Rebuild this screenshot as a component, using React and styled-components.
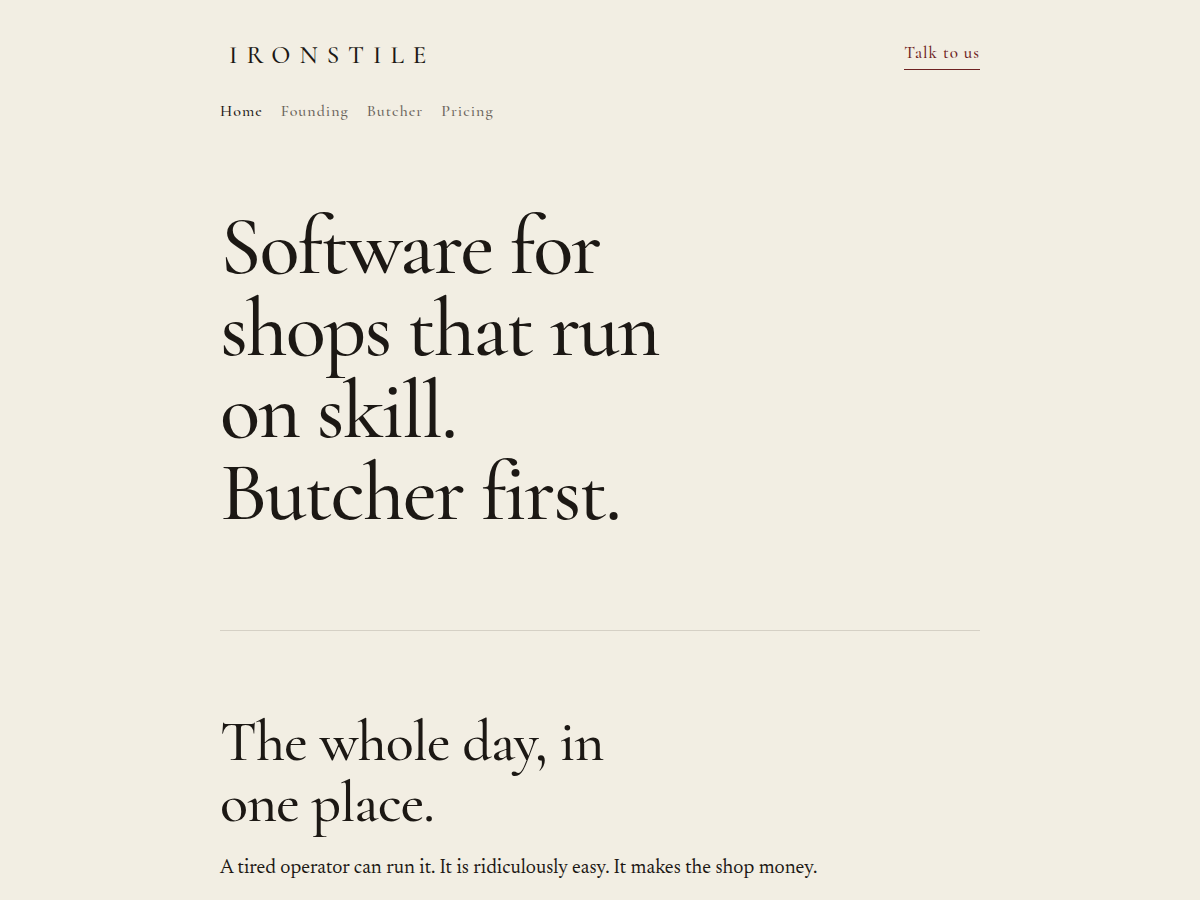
import React from "react";
import styled, { createGlobalStyle } from "styled-components";

const display = `"Cormorant Garamond", "Liberation Serif", serif`;
const body = `"Newsreader", "Liberation Serif", serif`;

const GlobalStyle = createGlobalStyle`
  *, *::before, *::after { box-sizing: border-box; }
  body {
    margin: 0;
    background: #f2eee3;
    color: #1c1814;
    font-family: ${body};
  }
`;

const Page = styled.div`
  max-width: 808px;
  margin: 0 auto;
  padding: 0 24px;
`;

const Header = styled.header`
  display: flex;
  flex-direction: column;
  gap: 30px;
  padding-top: 40px;
`;

const TopRow = styled.div`
  display: flex;
  justify-content: space-between;
  align-items: center;
`;

const Wordmark = styled.a`
  padding-left: 9px;
  font: 500 25px/30px ${display};
  letter-spacing: 9px;
  color: inherit;
  text-decoration: none;
`;

const ContactLink = styled.a`
  padding-bottom: 3px;
  border-bottom: 1px solid #6e2222;
  font: 500 17px/26px ${display};
  letter-spacing: 1px;
  color: #6e2222;
  text-decoration: none;
`;

const Nav = styled.nav`
  display: flex;
  flex-wrap: wrap;
  gap: 18px;
`;

const NavLink = styled.a`
  font: 500 16px/22px ${display};
  letter-spacing: 1px;
  color: ${({ $current }) => ($current ? "#1c1814" : "#6a645b")};
  text-decoration: none;
`;

const Hero = styled.section`
  padding: 84px 0 96px;
  border-bottom: 1px solid #d5d0c5;
`;

const HeroTitle = styled.h1`
  max-width: 480px;
  margin: 0;
  font: 500 83px/82px ${display};
  letter-spacing: -2px;
`;

const Section = styled.section`
  padding: 80px 0;
`;

const SectionTitle = styled.h2`
  max-width: 440px;
  margin: 0 0 20px;
  font: 500 58px/61px ${display};
  letter-spacing: -1px;
`;

const Lead = styled.p`
  margin: 0;
  font: 400 20px/30px ${body};
`;

const links = ["Home", "Founding", "Butcher", "Pricing"];

export default function App() {
  return (
    <>
      <GlobalStyle />
      <Page>
        <Header>
          <TopRow>
            <Wordmark href="#home">IRONSTILE</Wordmark>
            <ContactLink href="#contact">Talk to us</ContactLink>
          </TopRow>
          <Nav aria-label="Main">
            {links.map((name, i) => (
              <NavLink key={name} href={`#${name.toLowerCase()}`} $current={i === 0}>
                {name}
              </NavLink>
            ))}
          </Nav>
        </Header>
        <main>
          <Hero>
            <HeroTitle>
              Software for shops that run on skill.
              <br />
              Butcher first.
            </HeroTitle>
          </Hero>
          <Section>
            <SectionTitle>The whole day, in one place.</SectionTitle>
            <Lead>
              A tired operator can run it. It is ridiculously easy. It makes the shop money.
            </Lead>
          </Section>
        </main>
      </Page>
    </>
  );
}
